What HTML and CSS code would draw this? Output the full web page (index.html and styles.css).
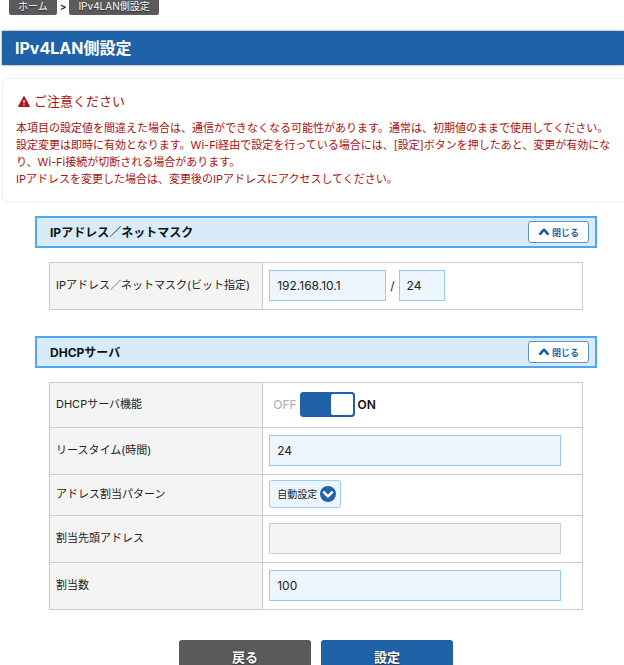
FILE: index.html
```html
<!DOCTYPE html>
<html lang="ja">
<head>
  <meta charset="UTF-8" />
  <title>IPv4LAN側設定</title>
  <meta name="viewport" content="width=device-width, initial-scale=1.0" />
  <link rel="stylesheet" href="styles.css">
</head>
<body>
  <div class="page">
    <nav class="breadcrumb">
      <a href="#" class="crumb">ホーム</a>
      <span class="crumb-sep">&gt;</span>
      <a href="#" class="crumb">IPv4LAN側設定</a>
    </nav>

    <h1 class="page-title">IPv4LAN側設定</h1>

    <section class="notice">
      <h2 class="notice-title">
        <svg class="warn-icon" viewBox="0 0 24 22" aria-hidden="true">
          <path d="M12 1 L23 21 H1 Z" fill="#a81212" stroke="#a81212" stroke-width="2" stroke-linejoin="round" />
          <path d="M10.6 8 H13.4 L13 15 H11 Z" fill="#fff" />
          <circle cx="12" cy="18" r="1.4" fill="#fff" />
        </svg>
        ご注意ください
      </h2>
      <p>本項目の設定値を間違えた場合は、通信ができなくなる可能性があります。通常は、初期値のままで使用してください。</p>
      <p>設定変更は即時に有効となります。Wi-Fi経由で設定を行っている場合には、[設定]ボタンを押したあと、変更が有効になり、Wi-Fi接続が切断される場合があります。</p>
      <p>IPアドレスを変更した場合は、変更後のIPアドレスにアクセスしてください。</p>
    </section>

    <form class="settings">
      <div class="section-head">
        <h2>IPアドレス／ネットマスク</h2>
        <button type="button" class="close-btn">
          <svg viewBox="0 0 12 8" aria-hidden="true"><path d="M1.6 6.6 L5.2 2.4 Q6 1.6 6.8 2.4 L10.4 6.6" fill="none" stroke="#1f62a7" stroke-width="2.8" /></svg>
          閉じる
        </button>
      </div>
      <table class="settings-table">
        <tr class="tall">
          <th><label for="ip">IPアドレス／ネットマスク(ビット指定)</label></th>
          <td>
            <div class="ip-row">
              <input type="text" id="ip" class="field field-ip" value="192.168.10.1" />
              <span>/</span>
              <input type="text" class="field field-mask" value="24" aria-label="ネットマスク" />
            </div>
          </td>
        </tr>
      </table>

      <div class="section-head">
        <h2>DHCPサーバ</h2>
        <button type="button" class="close-btn">
          <svg viewBox="0 0 12 8" aria-hidden="true"><path d="M1.6 6.6 L5.2 2.4 Q6 1.6 6.8 2.4 L10.4 6.6" fill="none" stroke="#1f62a7" stroke-width="2.8" /></svg>
          閉じる
        </button>
      </div>
      <table class="settings-table">
        <tr class="medium">
          <th><label for="dhcp">DHCPサーバ機能</label></th>
          <td>
            <div class="switch">
              <span class="off">OFF</span>
              <input type="checkbox" id="dhcp" class="toggle" checked />
              <span class="on">ON</span>
            </div>
          </td>
        </tr>
        <tr class="tall">
          <th><label for="lease">リースタイム(時間)</label></th>
          <td><input type="text" id="lease" class="field" value="24" /></td>
        </tr>
        <tr class="short">
          <th><label for="pattern">アドレス割当パターン</label></th>
          <td>
            <div class="select-box">
              <select id="pattern">
                <option>自動設定</option>
              </select>
              <svg class="select-icon" viewBox="0 0 16 16" aria-hidden="true">
                <circle cx="8" cy="8" r="8" fill="#1f62a7" />
                <path d="M4 6.4 L8 10.4 L12 6.4" fill="none" stroke="#fff" stroke-width="2.6" stroke-linecap="round" stroke-linejoin="round" />
              </svg>
            </div>
          </td>
        </tr>
        <tr class="tall">
          <th><label for="start">割当先頭アドレス</label></th>
          <td><input type="text" id="start" class="field" disabled /></td>
        </tr>
        <tr class="tall">
          <th><label for="count">割当数</label></th>
          <td><input type="text" id="count" class="field" value="100" /></td>
        </tr>
      </table>

      <div class="actions">
        <button type="button" class="btn btn-back">戻る</button>
        <button type="submit" class="btn btn-submit">設定</button>
      </div>
    </form>
  </div>
</body>
</html>
```
FILE: styles.css
```css
:root {
  --blue: #1f62a7;
  --gray: #5a5a5a;
  --red: #a81212;
  --line: #ccc;
  --field-bg: #edf6ff;
  --field-line: #93ccf8;
}

* {
  box-sizing: border-box;
}

body {
  margin: 0;
  background: #fff;
  color: #222;
  font-family: Inter, "Noto Sans CJK JP", sans-serif;
  font-size: 11px;
  line-height: 17px;
}

h1, h2, p {
  margin: 0;
}

button, input, select {
  font-family: inherit;
}

.page {
  height: 100vh;
  overflow: hidden;
  padding-left: 2px;
}

.breadcrumb {
  display: flex;
  align-items: center;
  gap: 3px;
  margin-top: -3px;
  padding-left: 7px;
  font-size: 10px;
}

.crumb {
  height: 18px;
  padding: 0 9px;
  background: var(--gray);
  border-radius: 2px;
  color: #fff;
  line-height: 18px;
  text-decoration: none;
  text-shadow: 0 1px 1px #222;
}

.crumb-sep {
  font-weight: 600;
}

.page-title {
  margin-top: 16px;
  padding: 0 13px;
  background: var(--blue);
  box-shadow: 0 0 2px #777;
  color: #fff;
  font-size: 16px;
  line-height: 34px;
}

.notice {
  margin-top: 13px;
  padding: 13px 11px 14px 13px;
  border: 1px solid #eee;
  border-right: none;
  border-radius: 6px 0 0 6px;
  color: var(--red);
}

.notice-title {
  display: flex;
  align-items: center;
  gap: 4px;
  padding-left: 2px;
  margin-bottom: 10px;
  font-size: 13px;
  font-weight: normal;
  line-height: 18px;
}

.warn-icon {
  width: 12px;
  height: 11px;
}

.settings {
  margin: 13px 27px 0 33px;
}

.section-head {
  display: flex;
  align-items: center;
  justify-content: space-between;
  height: 32px;
  padding: 0 6px 0 13px;
  background: #d8ebfa;
  border: 2px solid #4da6f5;
  color: #111;
}

.section-head h2 {
  font-size: 12px;
}

.close-btn {
  display: flex;
  align-items: center;
  gap: 2px;
  height: 22px;
  padding: 0 9px;
  background: #fff;
  border: 1px solid #5b94d0;
  border-radius: 3px;
  color: var(--blue);
  font-size: 9px;
  font-weight: bold;
}

.close-btn svg {
  width: 12px;
  height: 8px;
}

.settings-table {
  width: calc(100% - 28px);
  margin: 14px 14px 26px;
  border-collapse: collapse;
  table-layout: fixed;
}

.settings-table th,
.settings-table td {
  padding: 0 6px 2px;
  border: 1px solid var(--line);
  text-align: left;
  vertical-align: middle;
}

.settings-table th {
  width: 40%;
  background: #f4f4f4;
  font-weight: normal;
  white-space: nowrap;
}

.tall {
  height: 47px;
}

.medium {
  height: 45px;
}

.short {
  height: 41px;
}

.field {
  display: block;
  width: 95%;
  height: 31px;
  padding: 0 7px;
  background: var(--field-bg);
  border: 1px solid var(--field-line);
  border-radius: 0;
  color: #222;
  font-size: 12px;
}

.field:disabled {
  background: #f4f4f4;
  border-color: var(--line);
}

.ip-row {
  display: flex;
  align-items: center;
  gap: 4px;
  font-size: 12px;
}

.field-ip {
  width: 117px;
}

.field-mask {
  width: 46px;
}

.switch {
  display: flex;
  align-items: center;
  gap: 3px;
  padding-left: 4px;
  font-size: 12px;
}

.off {
  color: #b5b5b5;
  font-weight: 500;
}

.on {
  color: #111;
  font-weight: 600;
}

.toggle {
  appearance: none;
  width: 55px;
  height: 25px;
  margin: 0;
  padding: 1px;
  background: var(--blue);
  border: 1px solid var(--blue);
  border-radius: 3px;
}

.toggle::before {
  content: "";
  display: block;
  width: 22px;
  height: 100%;
  background: #fff;
  border-radius: 2px;
}

.toggle:checked::before {
  margin-left: auto;
}

.select-box {
  display: inline-block;
  position: relative;
  vertical-align: middle;
}

.select-box select {
  appearance: none;
  display: block;
  height: 28px;
  padding: 0 23px 0 7px;
  background: var(--field-bg);
  border: 1px solid var(--field-line);
  border-radius: 3px;
  color: #222;
  font-size: 10px;
}

.select-icon {
  position: absolute;
  top: 6px;
  right: 5px;
  width: 16px;
  height: 16px;
  pointer-events: none;
}

.actions {
  display: flex;
  justify-content: center;
  gap: 10px;
  margin-top: 30px;
}

.btn {
  width: 132px;
  height: 32px;
  border: none;
  border-radius: 3px;
  color: #fff;
  font-size: 13px;
  font-weight: bold;
  text-shadow: 0 1px 2px #222;
}

.btn-back {
  background: var(--gray);
}

.btn-submit {
  background: var(--blue);
}
```
